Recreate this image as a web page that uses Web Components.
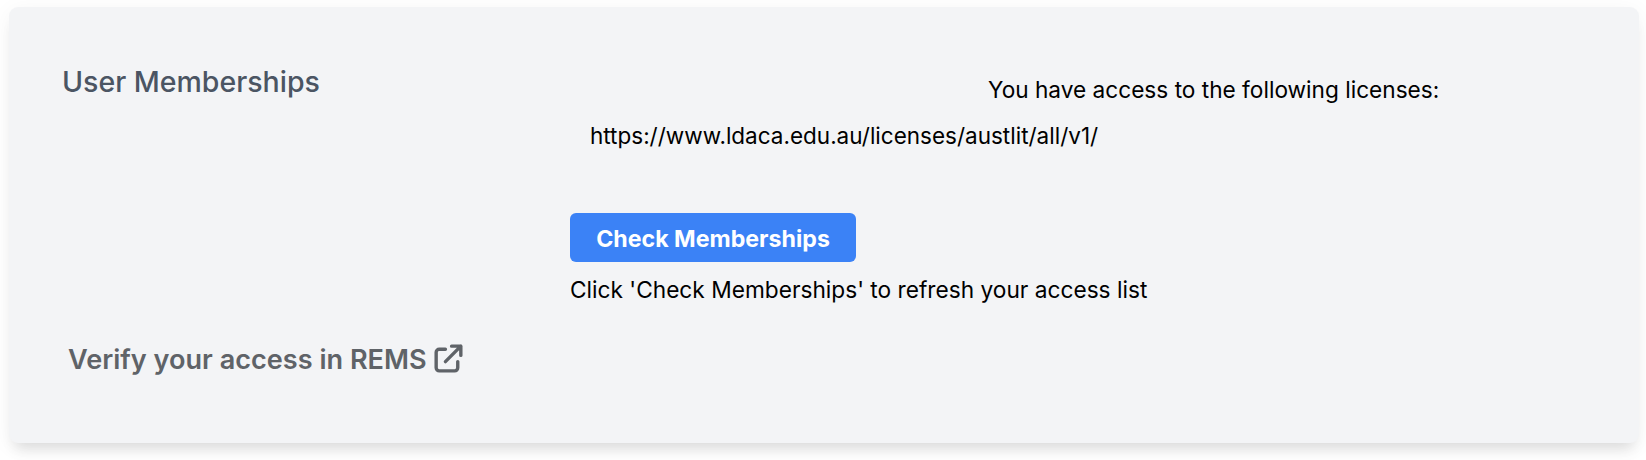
<!DOCTYPE html>
<html>
<head>
<meta charset="utf-8">
<title>User Memberships</title>
<style>
  html, body { margin: 0; background: #fff; }
  body { font-family: Inter, "Liberation Sans", sans-serif; }
</style>
</head>
<body>
<template id="membership-card-tpl">
  <style>
    :host { display: block; padding: 7px 7px 17px 9px; }
    .card {
      box-sizing: border-box;
      height: 436px;
      background: #f3f4f6;
      border-radius: 9px;
      box-shadow: 0 12px 14px -6px rgba(0,0,0,0.11), 0 4px 22px 0 rgba(0,0,0,0.05);
      display: grid;
      grid-template-columns: 561px 1fr;
      padding: 53px 0 0 0;
    }
    .left { display: flex; flex-direction: column; justify-content: space-between; padding: 4px 0 65px 53px; }
    .title { font-size: 28.5px; line-height: 36px; font-weight: 500; color: #4b5563; margin: 0; }
  </style>
  <div class="card">
    <div class="left">
      <h2 class="title"><slot name="title"></slot></h2>
      <slot name="link"></slot>
    </div>
    <div class="right"><slot></slot></div>
  </div>
</template>

<template id="license-list-tpl">
  <style>
    :host { display: block; color: #000; font-size: 22.6px; line-height: 30px; }
    .head { padding: 15px 0 0 418px; font-size: 22.65px; }
    .item { margin-top: 16px; padding-left: 20px; font-size: 22.5px; }
  </style>
  <div class="head"><slot name="heading"></slot></div>
  <div class="item"><slot></slot></div>
</template>

<template id="check-button-tpl">
  <style>
    :host { display: block; margin-top: 62px; font-size: 22.7px; color: #000; }
    button {
      display: block;
      width: 286px;
      height: 49px;
      border: 0;
      border-radius: 6px;
      background: #3b82f6;
      color: #fff;
      font: 700 23.2px/30px Inter, "Liberation Sans", sans-serif;
      padding: 2px 0 0;
    }
    p { margin: 13px 0 0; line-height: 30px; }
  </style>
  <button><slot name="label"></slot></button>
  <p><slot></slot></p>
</template>

<template id="external-link-tpl">
  <style>
    :host { display: block; padding-left: 6px; }
    a { display: inline-flex; align-items: center; gap: 3px; color: #5f6368; font-size: 27.1px; font-weight: 600; line-height: 36px; text-decoration: none; }
    svg { width: 37px; height: 37px; display: block; margin: -4px 0 0; }
  </style>
  <a href="#"><span><slot></slot></span>
    <svg viewBox="0 0 24 24" fill="none" stroke="currentColor" stroke-width="2.2" stroke-linecap="round" stroke-linejoin="round"><path d="M10 6H6a2 2 0 0 0-2 2v10a2 2 0 0 0 2 2h10a2 2 0 0 0 2-2v-4M14 4h6m0 0v6m0-6L10 14"/></svg>
  </a>
</template>

<membership-card>
  <span slot="title">User Memberships</span>
  <external-link slot="link">Verify your access in REMS</external-link>
  <license-list>
    <span slot="heading">You have access to the following licenses:</span>
    https://www.ldaca.edu.au/licenses/austlit/all/v1/
  </license-list>
  <check-button>
    <span slot="label">Check Memberships</span>
    Click 'Check Memberships' to refresh your access list
  </check-button>
</membership-card>

<script>
  function define(name, tplId) {
    customElements.define(name, class extends HTMLElement {
      constructor() {
        super();
        this.attachShadow({mode: "open"}).appendChild(document.getElementById(tplId).content.cloneNode(true));
      }
    });
  }
  define("membership-card", "membership-card-tpl");
  define("license-list", "license-list-tpl");
  define("check-button", "check-button-tpl");
  define("external-link", "external-link-tpl");
</script>
</body>
</html>
